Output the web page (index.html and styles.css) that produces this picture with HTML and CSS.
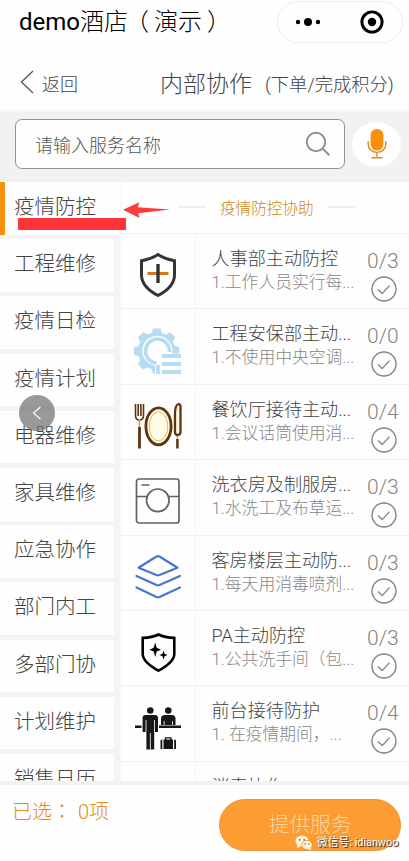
FILE: index.html
```html
<!DOCTYPE html>
<html lang="zh-CN">
<head>
<meta charset="utf-8">
<meta name="viewport" content="width=device-width, initial-scale=1">
<title>demo酒店（演示）</title>
<link rel="stylesheet" href="styles.css">
</head>
<body>
<svg class="defs" width="0" height="0"><symbol id="check" viewBox="0 0 26 26"><circle cx="13" cy="13" r="12"/><path d="M7 13.5l4.2 4.1 7.3-8"/></symbol></svg>
<div class="app">
  <header class="appbar">
    <h1><span class="latin">demo</span>酒店<span class="open">（</span>演示<span class="close">）</span></h1>
    <div class="capsule">
      <svg width="26" height="10" viewBox="0 0 26 10"><circle cx="3" cy="5" r="2.2"/><circle cx="13" cy="5" r="4"/><circle cx="23" cy="5" r="2.2"/></svg>
      <i></i>
      <svg width="24" height="24" viewBox="0 0 24 24"><circle cx="12" cy="12" r="10.1" fill="none" stroke="#000" stroke-width="2.9"/><circle cx="12" cy="12" r="4.2"/></svg>
    </div>
  </header>
  <nav class="nav">
    <svg width="14" height="24" viewBox="0 0 14 24"><path d="M13 1L1.5 12 13 23"/></svg>
    <span class="back">返回</span>
    <h2>内部协作</h2>
    <span class="note">(下单/完成积分)</span>
  </nav>
  <section class="search">
    <div class="field"><span>请输入服务名称</span>
      <svg width="26" height="26" viewBox="0 0 26 26"><circle cx="11" cy="11" r="9.2"/><path d="M17.5 17.5L24.3 24.3"/></svg>
    </div>
    <div class="mic"><svg width="20" height="32" viewBox="0 0 20 32"><rect x="3.6" y="1" width="12.8" height="21.5" rx="6.4" fill="#f8900c"/><path d="M1.2 13v3.4a8.8 8 0 0 0 17.6 0V13M10 24.5v5M4.5 29.8h11" fill="none" stroke="#de8a1d" stroke-width="1.4"/></svg></div>
  </section>
  <main class="body">
    <aside class="side">
      <div class="tab active">疫情防控<b class="underline"></b>
        <svg class="arrow" width="48" height="18" viewBox="0 0 48 18"><path d="M0 8.8L16.4 1.2 14.8 6.3 47 8.5 15.2 12.3 16.6 17z"/></svg>
      </div>
      <div class="tab">工程维修</div>
      <div class="tab">疫情日检</div>
      <div class="tab">疫情计划</div>
      <div class="tab">电器维修<span class="float"><svg width="10" height="14" viewBox="0 0 10 14"><path d="M8.5 1L1.5 7l7 6"/></svg></span></div>
      <div class="tab">家具维修</div>
      <div class="tab">应急协作</div>
      <div class="tab">部门内工</div>
      <div class="tab">多部门协</div>
      <div class="tab">计划维护</div>
      <div class="tab">销售日历</div>
    </aside>
    <section class="list">
      <div class="group"><i></i><span>疫情防控协助</span><i></i></div>
      <article class="row">
        <div class="icon"><svg width="48" height="48" viewBox="0 0 48 48"><path d="M24 3.600c4.500 3 10.500 5.300 16.500 6.200V24c0 9-6.500 15.300-16.500 20.500C14 39.300 7.500 33 7.500 24V9.800C13.500 8.900 19.500 6.600 24 3.600z" fill="none" stroke="#343438" stroke-width="3"/><path d="M13.500 22.500h21" stroke="#d97618" stroke-width="3"/><path d="M24 13v19" stroke="#343438" stroke-width="3.400"/></svg></div>
        <div class="copy"><h3>人事部主动防控</h3><p>1.工作人员实行每...</p></div>
        <div class="stat"><span>0/3</span><svg><use href="#check"/></svg></div>
      </article>
      <article class="row">
        <div class="icon"><svg width="48" height="48" viewBox="0 0 48 48"><path d="M19 1.500h7.500l1.500 4.500 3.700 1.600 4.500-2.400 5 5-2.300 4.500 1.700 4 4.700 1.500v6.300H38A15 15 0 1 0 21 38.500v8h-2L17.500 42l-4-1.600-4.400 2.200-5-5 2-4.500L4.500 29.300 0 27.800v-7.300L4.500 19l1.700-4-2.300-4.700 5.200-5 4.500 2.300L17.500 6z" fill="#b7dcf2"/><path d="M35.500 25A12 12 0 1 0 22.500 36" fill="none" stroke="#b7dcf2" stroke-width="3.500"/><path d="M28 29h19M28 37h19M28 45h19M24 38v9" fill="none" stroke="#b7dcf2" stroke-width="3.800"/></svg></div>
        <div class="copy"><h3>工程安保部主动...</h3><p>1.不使用中央空调...</p></div>
        <div class="stat"><span>0/0</span><svg><use href="#check"/></svg></div>
      </article>
      <article class="row">
        <div class="icon"><svg width="48" height="48" viewBox="0 0 48 48"><ellipse cx="24.500" cy="24.300" rx="12.600" ry="18.500" fill="#fff9db" stroke="#603411" stroke-width="2.800"/><ellipse cx="24.500" cy="24.300" rx="9.200" ry="14.600" fill="#fffbe6" stroke="#d8bd79" stroke-width="1"/><path d="M1.500 2v11c0 3 1.500 5 4 5s4-2 4-5V2M4.200 2v12M6.900 2v12" fill="none" stroke="#603411" stroke-width="1.600"/><path d="M5.500 17v9" stroke="#c9a45b" stroke-width="1.600"/><path d="M5.500 25v21.500" stroke="#603411" stroke-width="2.800"/><path d="M46.500 4q-.5-2-2-2-3.500 1-3.500 10.500V30q0 3 2.700 3t2.800-3z" fill="#fffae5" stroke="#603411" stroke-width="2.300"/><path d="M43.400 34v4" stroke="#c9a45b" stroke-width="1.500"/><path d="M43.400 37v9.500" stroke="#603411" stroke-width="2.500"/></svg></div>
        <div class="copy"><h3>餐饮厅接待主动...</h3><p>1.会议话筒使用消...</p></div>
        <div class="stat"><span>0/4</span><svg><use href="#check"/></svg></div>
      </article>
      <article class="row">
        <div class="icon"><svg width="48" height="48" viewBox="0 0 48 48" fill="none" stroke="#626264" stroke-width="1.700"><rect x="2.500" y="2" width="42.500" height="44" rx="2.500"/><circle cx="23.800" cy="23.300" r="11.300"/><path d="M3 19.500h10M34.500 19.500H45M7.500 8h8"/></svg></div>
        <div class="copy"><h3>洗衣房及制服房...</h3><p>1.水洗工及布草运...</p></div>
        <div class="stat"><span>0/3</span><svg><use href="#check"/></svg></div>
      </article>
      <article class="row">
        <div class="icon"><svg width="48" height="48" viewBox="0 0 48 48" fill="none" stroke="#4775d5" stroke-width="2.200" stroke-linecap="round" stroke-linejoin="round"><path d="M22.500 3.500q1.500-.7 3 0l18 11.200-18 7.300q-1.500.5-3 0L4.500 14.700zM2.500 23l20 9q1.500.6 3 0l20.500-9M2.500 34.500l20 9.500q1.500.6 3 0L46 34.500"/></svg></div>
        <div class="copy"><h3>客房楼层主动防...</h3><p>1.每天用消毒喷剂...</p></div>
        <div class="stat"><span>0/3</span><svg><use href="#check"/></svg></div>
      </article>
      <article class="row">
        <div class="icon"><svg width="48" height="48" viewBox="0 0 48 48"><path d="M24.500 6.500c4 2 10 3.200 15.800 3.400v16c0 6.500-7.300 12-15.800 16.800C16 37.900 8.700 32.400 8.700 25.900v-16C14.500 9.700 20.500 8.500 24.500 6.500z" fill="none" stroke="#000" stroke-width="2.600"/><path d="M21.200 14.500l1.500 5.300 4.300 1.900-4.300 1.900-1.500 5.400-1.500-5.400-4.300-1.900 4.300-1.900zM29.500 22.500l1 3.200 3 1.300-3 1.300-1 3.400-1-3.400-3-1.300 3-1.300z"/></svg></div>
        <div class="copy"><h3>PA主动防控</h3><p>1.公共洗手间（包...</p></div>
        <div class="stat"><span>0/3</span><svg><use href="#check"/></svg></div>
      </article>
      <article class="row">
        <div class="icon"><svg width="48" height="48" viewBox="0 0 48 48" fill="#171717"><circle cx="16.300" cy="6.500" r="3.300"/><circle cx="34.300" cy="6.500" r="3.300"/><path d="M11.500 11h9.500q3 0 3 3v14h-3V16h-.8v29.500h-3.500V29h-.8v16.500h-3.500V16h-.8v12h-3V14q0-3 2.900-3zM1 21.500h6.500V24H1zM25 21.500h22V24H25zM31 11h7q3 0 3.500 3v7h-2.700v-4h-.8v4h-7.500v-4h-.8v4H27v-7q.5-3 4-3zM29.500 35.500h9.500v9.500h-9.500zM26.500 36.500q0-1 1.800-1V45h-1.800zM40.200 35.500q1.800 0 1.800 1V45h-1.800z"/><path d="M31.500 36v-2.200h5.500V36" fill="none" stroke="#171717" stroke-width="1.300"/></svg></div>
        <div class="copy"><h3>前台接待防护</h3><p>1. 在疫情期间，...</p></div>
        <div class="stat"><span>0/4</span><svg><use href="#check"/></svg></div>
      </article>
      <article class="row">
        <div class="icon"></div>
        <div class="copy"><h3>消毒协作</h3></div>
        <div class="stat"><span>0/4</span></div>
      </article>
    </section>
  </main>
  <footer class="footer">
    <div class="chosen">已选<span class="colon" lang="zh-TW">：</span>0项</div>
    <div class="submit">提供服务
      <div class="mark"><svg width="18" height="16" viewBox="0 0 18 16"><ellipse cx="7" cy="6" rx="6.500" ry="5.500"/><path d="M2.500 9.500L2 13l3.500-2z"/><ellipse cx="12" cy="10" rx="5.300" ry="4.600" stroke="#d88733" stroke-width=".7"/><path d="M13 14l3 1.500-.5-3z"/><g fill="#99642c"><circle cx="4.800" cy="4.800" r=".9"/><circle cx="9.200" cy="4.800" r=".9"/><circle cx="10.200" cy="9" r=".8"/><circle cx="13.800" cy="9" r=".8"/></g></svg><span>微信号: idianwoo</span></div>
    </div>
  </footer>
</div>
</body>
</html>
```
FILE: styles.css
```css
* { box-sizing: border-box; }
body { margin: 0; background: #fefefe; font-family: Roboto, "Noto Sans CJK SC", sans-serif; font-weight: 300; color: #444; }
h1, h2, h3, p { margin: 0; font-weight: 300; }
svg { display: block; flex: none; }
.defs { position: absolute; }
.app { width: 409px; height: 861px; display: flex; flex-direction: column; overflow: hidden; white-space: nowrap; }

.appbar { height: 44px; flex: none; display: flex; justify-content: space-between; padding: 0 6px 0 19px; }
.appbar h1 { font-size: 24px; line-height: 44px; color: #000; }
.latin { font-weight: 400; }
.open { margin: 0 5px 0 -3px; }
.close { margin-left: 5px; }
.capsule { width: 126px; height: 42px; margin-top: 1px; border: 1px solid #eee; border-radius: 21px; display: flex; align-items: center; padding: 0 18px 0 17px; }
.capsule i { width: 1px; height: 26px; background: #eee; margin: 0 21px 0 18px; }

.nav { height: 68px; flex: none; display: flex; align-items: center; padding: 10px 0 0 20px; border-bottom: 2px solid #f7f7f7; }
.nav path { fill: none; stroke: #5a5a5a; stroke-width: 1.4; }
.back { width: 118px; margin-left: 8px; padding-top: 1px; font-size: 18px; }
.nav h2 { width: 105px; font-size: 23px; }
.note { font-size: 18.3px; padding-top: 2px; }

.search { height: 70px; flex: none; display: flex; align-items: center; background: #f1f1f1; padding: 0 8px 6px 15px; gap: 7px; }
.field { width: 330px; height: 50px; display: flex; align-items: center; justify-content: space-between; padding: 0 13px 1px 19px; border: 1px solid #929292; border-radius: 7px; background: #fefefe; font-size: 18px; color: #555; }
.field svg { fill: none; stroke: #929292; stroke-width: 2; }
.mic { width: 49px; height: 45px; border-radius: 50%; background: #fff; display: flex; align-items: center; justify-content: center; }

.body { height: 599px; flex: none; display: flex; overflow: hidden; }
.side { width: 120px; flex: none; background: #f4f4f4; position: relative; z-index: 1; }
.tab { position: relative; width: 114px; height: 52.6px; margin-bottom: 4.6px; padding-left: 14px; font-size: 20.5px; line-height: 51px; background: #fefefe; }
.active { width: 120px; border-left: 5px solid #f8920e; padding-left: 9px; }
.underline { position: absolute; left: 13px; top: 36px; width: 108px; height: 12px; background: #fb3438; }
.arrow { position: absolute; left: 118px; top: 19px; fill: #f93c3d; }
.float { position: absolute; left: 19px; top: -16px; width: 36px; height: 36px; border-radius: 50%; background: rgba(105,105,105,.68); display: flex; align-items: center; justify-content: center; }
.float path { fill: none; stroke: #fff; stroke-width: 1.2; }

.list { flex: 1; border-left: 1px solid #f7f7f7; }
.group { height: 51px; display: flex; align-items: center; gap: 14px; padding: 0 0 2px 57px; font-size: 15.6px; color: #d08812; }
.group i { width: 28px; height: 2px; background: #efefef; }
.row { height: 75.4px; display: flex; border-top: 1.5px solid #f3f2f3; }
.icon { width: 75px; flex: none; display: flex; align-items: center; justify-content: center; padding-top: 8px; border-right: 1px solid #f3f2f3; }
.copy { width: 171px; flex: none; padding: 12px 0 0 15.5px; }
.copy h3 { font-size: 18.1px; line-height: 26px; }
.copy p { font-size: 16.8px; line-height: 21px; color: #888; }
.stat { width: 42px; padding-top: 14px; color: #858585; font-size: 21px; line-height: 26px; }
.stat span { display: block; }
.stat svg { width: 26px; height: 26px; margin: 2px 0 0 4px; fill: none; stroke: #858585; stroke-width: 1.4; }

.footer { flex: 1; border-top: 4px solid #f2f2f3; display: flex; justify-content: space-between; padding: 14px 8px 0 12px; }
.chosen { font-size: 20px; line-height: 24px; color: #df8d16; }
.colon { font-family: "Noto Sans CJK TC", sans-serif; margin-right: 6px; }
.submit { position: relative; width: 182px; height: 52px; border-radius: 26px; background: #fc9d34; border: 1px solid #e9973a; color: #f9d7a3; font-size: 20.8px; line-height: 50px; text-align: center; }
.mark { position: absolute; left: 75px; top: 34px; display: flex; align-items: center; gap: 4px; font-size: 10.8px; line-height: 18px; font-weight: 400; color: #fff; text-shadow: 1px 1px 1px #593d20, 1px 1px 0 #876545; }
.mark svg { fill: #fff3df; }
```
